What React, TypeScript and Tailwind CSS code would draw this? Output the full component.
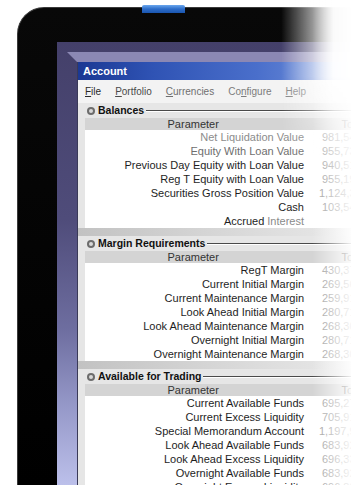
import React from 'react';

type Row = { label: string; value: string; tone?: string };

interface Section {
  title: string;
  rows: Row[];
}

const SECTIONS: Section[] = [
  {
    title: 'Balances',
    rows: [
      { label: 'Net Liquidation Value', value: '981,548.27', tone: 'text-[#8c8c8c]' },
      { label: 'Equity With Loan Value', value: '955,736.10', tone: 'text-[#6e6e6e]' },
      { label: 'Previous Day Equity with Loan Value', value: '940,512.84' },
      { label: 'Reg T Equity with Loan Value', value: '955,191.66' },
      { label: 'Securities Gross Position Value', value: '1,124,305.0' },
      { label: 'Cash', value: '103,542.19' },
      { label: 'Accrued Interest', value: '' },
    ],
  },
  {
    title: 'Margin Requirements',
    rows: [
      { label: 'RegT Margin', value: '430,374.55' },
      { label: 'Current Initial Margin', value: '269,561.40' },
      { label: 'Current Maintenance Margin', value: '259,918.23' },
      { label: 'Look Ahead Initial Margin', value: '280,712.98' },
      { label: 'Look Ahead Maintenance Margin', value: '268,305.61' },
      { label: 'Overnight Initial Margin', value: '280,712.98' },
      { label: 'Overnight Maintenance Margin', value: '268,305.61' },
    ],
  },
  {
    title: 'Available for Trading',
    rows: [
      { label: 'Current Available Funds', value: '695,274.45' },
      { label: 'Current Excess Liquidity', value: '705,917.62' },
      { label: 'Special Memorandum Account', value: '1,197,950.3' },
      { label: 'Look Ahead Available Funds', value: '683,923.04' },
      { label: 'Look Ahead Excess Liquidity', value: '696,330.41' },
      { label: 'Overnight Available Funds', value: '683,923.04' },
      { label: 'Overnight Excess Liquidity', value: '696,330.41' },
    ],
  },
];

const MENU = [
  { pre: '', key: 'F', post: 'ile', tone: 'text-[#2a2a2a]' },
  { pre: '', key: 'P', post: 'ortfolio', tone: 'text-[#4a4a4a]' },
  { pre: '', key: 'C', post: 'urrencies', tone: 'text-[#707070]' },
  { pre: 'Co', key: 'n', post: 'figure', tone: 'text-[#7c7c7c]' },
  { pre: '', key: 'H', post: 'elp', tone: 'text-[#828282]' },
];

const SectionBlock = ({ section }: { section: Section }) => (
  <div className="flex flex-col">
    {/* collapsible group header */}
    <div className="h-[15px] flex items-center pl-[2px] pr-1">
      <span className="w-[8px] h-[8px] rounded-full bg-[#6c6c6c] flex items-center justify-center shrink-0">
        <span className="w-[4px] h-[4px] rounded-full bg-[#d8d8d8]" />
      </span>
      <span className="ml-[3px] text-[10.5px] font-bold text-[#111] leading-none whitespace-nowrap">
        {section.title}
      </span>
      <span className="ml-[2px] flex-1 flex flex-col">
        <span className="h-px bg-[#4a4a4a]" />
        <span className="h-px bg-white" />
      </span>
    </div>
    <div className="h-[12px] flex bg-[#d4d4d4] text-[11px] leading-none text-[#333]">
      <div className="w-[219px] flex items-center justify-center">Parameter</div>
      <div className="w-[76px] flex items-center pl-[40px]">Total</div>
    </div>
    <div className="bg-white">
      {section.rows.map((r) => (
        <div key={r.label} className="h-[14px] flex items-center text-[11px] leading-none">
          <div className={`w-[219px] text-right whitespace-nowrap ${r.tone ?? 'text-[#1e1e1e]'}`}>
            {r.label === 'Accrued Interest' ? (
              <>
                Accrued <span className="text-[#8a8a8a]">Interest</span>
              </>
            ) : (
              r.label
            )}
          </div>
          <div className="w-[73px] text-right whitespace-nowrap text-[#9a9a9a]">{r.value}</div>
        </div>
      ))}
    </div>
  </div>
);

export default function App() {
  return (
    <div className="relative w-[351px] h-[485px] overflow-hidden bg-white font-['Liberation_Sans',Arial,sans-serif]">
      {/* monitor bezel */}
      <div className="ml-[17px] mt-[7px] w-[380px] h-[478px] bg-[linear-gradient(to_bottom,#080808,#000)] rounded-tl-[27px] border-l border-t border-[#3a3a3a] pl-[39px] pt-[34px] flex">
        <div className="relative flex-1 h-full overflow-hidden pl-[20px] pt-[20px] bg-[linear-gradient(to_bottom,#44406a_0%,#4f4c7a_40%,#6e6ea0_65%,#9598c8_82%,#bcc0ea_100%)]">
          {/* top lit strip of the screen */}
          <div className="absolute inset-0 bg-[#8b88b4] [clip-path:polygon(10px_10px,100%_10px,100%_20px,20px_20px)]" />

          <div className="relative w-[300px] h-full flex flex-col bg-[#e6e6e6] border-l border-[#3a3a58]">
            <div className="h-[18px] shrink-0 flex items-center pl-[5px] bg-[linear-gradient(to_right,#1b3893,#2f53b4_25%,#4a6fcb_60%,#86a2e2)]">
              <span className="text-white text-[11px] font-bold leading-none">Account</span>
            </div>
            <div className="h-[23px] shrink-0 flex items-center gap-[14px] pl-[7px] bg-[#f3f3f3] text-[10px] leading-none">
              {MENU.map((m) => (
                <span key={m.key + m.post} className={m.tone}>
                  {m.pre}
                  <span className="underline underline-offset-[1px]">{m.key}</span>
                  {m.post}
                </span>
              ))}
            </div>
            <div className="flex flex-col pl-[7px]">
              {SECTIONS.map((s, i) => (
                <React.Fragment key={s.title}>
                  {i > 0 && (
                    <div className="h-[8px] -ml-[7px] bg-[linear-gradient(to_right,#c2c2c2,#dcdcdc_60%,#ececec)]" />
                  )}
                  <SectionBlock section={s} />
                </React.Fragment>
              ))}
            </div>
          </div>
        </div>
      </div>

      {/* power button on top edge */}
      <div className="absolute left-[142px] top-[5px] w-[43px] h-[8px] rounded-t-[2px] bg-[linear-gradient(to_bottom,#6aa6ee,#2c6cc8_50%,#1a56b0)]" />

      {/* glossy fade towards the right */}
      <div className="absolute inset-0 pointer-events-none bg-[linear-gradient(to_right,transparent_89%,rgba(255,255,255,0.9)_100%)]" />
      <div className="absolute right-0 top-0 w-[70px] h-[170px] pointer-events-none bg-[linear-gradient(to_right,transparent,rgba(255,255,255,0.96)_75%)] [mask-image:linear-gradient(to_bottom,black_45%,transparent)]" />
    </div>
  );
}
